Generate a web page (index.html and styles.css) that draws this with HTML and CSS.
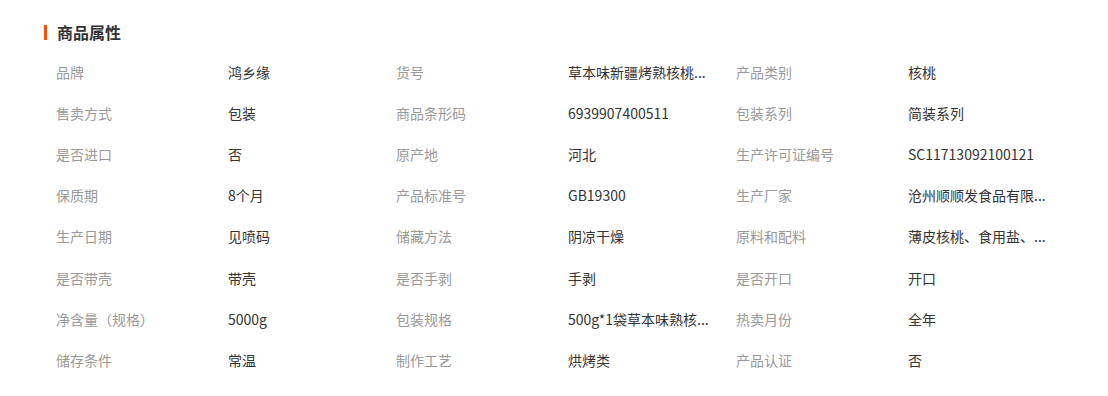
FILE: index.html
```html
<!DOCTYPE html>
<html lang="zh-CN">
<head>
<meta charset="utf-8">
<title>商品属性</title>
<link rel="stylesheet" href="styles.css">
</head>
<body>
<section class="attrs">
  <h2 class="attrs-title">商品属性</h2>
  <div class="attrs-grid">
    <div class="k">品牌</div><div class="v">鸿乡缘</div>
    <div class="k">货号</div><div class="v">草本味新疆烤熟核桃...</div>
    <div class="k">产品类别</div><div class="v">核桃</div>

    <div class="k">售卖方式</div><div class="v">包装</div>
    <div class="k">商品条形码</div><div class="v">6939907400511</div>
    <div class="k">包装系列</div><div class="v">简装系列</div>

    <div class="k">是否进口</div><div class="v">否</div>
    <div class="k">原产地</div><div class="v">河北</div>
    <div class="k">生产许可证编号</div><div class="v">SC11713092100121</div>

    <div class="k">保质期</div><div class="v">8个月</div>
    <div class="k">产品标准号</div><div class="v">GB19300</div>
    <div class="k">生产厂家</div><div class="v">沧州顺顺发食品有限...</div>

    <div class="k">生产日期</div><div class="v">见喷码</div>
    <div class="k">储藏方法</div><div class="v">阴凉干燥</div>
    <div class="k">原料和配料</div><div class="v">薄皮核桃、食用盐、...</div>

    <div class="k">是否带壳</div><div class="v">带壳</div>
    <div class="k">是否手剥</div><div class="v">手剥</div>
    <div class="k">是否开口</div><div class="v">开口</div>

    <div class="k">净含量（规格）</div><div class="v">5000g</div>
    <div class="k">包装规格</div><div class="v">500g*1袋草本味熟核...</div>
    <div class="k">热卖月份</div><div class="v">全年</div>

    <div class="k">储存条件</div><div class="v">常温</div>
    <div class="k">制作工艺</div><div class="v">烘烤类</div>
    <div class="k">产品认证</div><div class="v">否</div>
  </div>
</section>
</body>
</html>
```
FILE: styles.css
```css
html, body {
  margin: 0;
  padding: 0;
  background: #fff;
}
body {
  font-family: "Microsoft YaHei", "Noto Sans CJK SC", "Noto Sans", sans-serif;
  font-size: 14px;
  color: #333;
}
.attrs {
  padding: 17px 0 0 44px;
}
.attrs-title {
  margin: 0;
  height: 30px;
  line-height: 30px;
  font-size: 16px;
  font-weight: bold;
  color: #333;
  display: flex;
  align-items: center;
  gap: 10px;
}
.attrs-title::before {
  content: "";
  width: 3px;
  height: 15px;
  background: #ff4b0a;
}
.attrs-grid {
  margin: 4px 0 0 12px;
  display: grid;
  grid-template-columns: 172px 168px 172px 168px 172px 168px;
  grid-auto-rows: 41.2px;
  align-items: center;
}
.k, .v {
  line-height: 20px;
  white-space: nowrap;
  overflow: hidden;
  text-overflow: ellipsis;
}
.k {
  color: #999;
}
.v {
  color: #333;
  max-width: 150px;
}
```
